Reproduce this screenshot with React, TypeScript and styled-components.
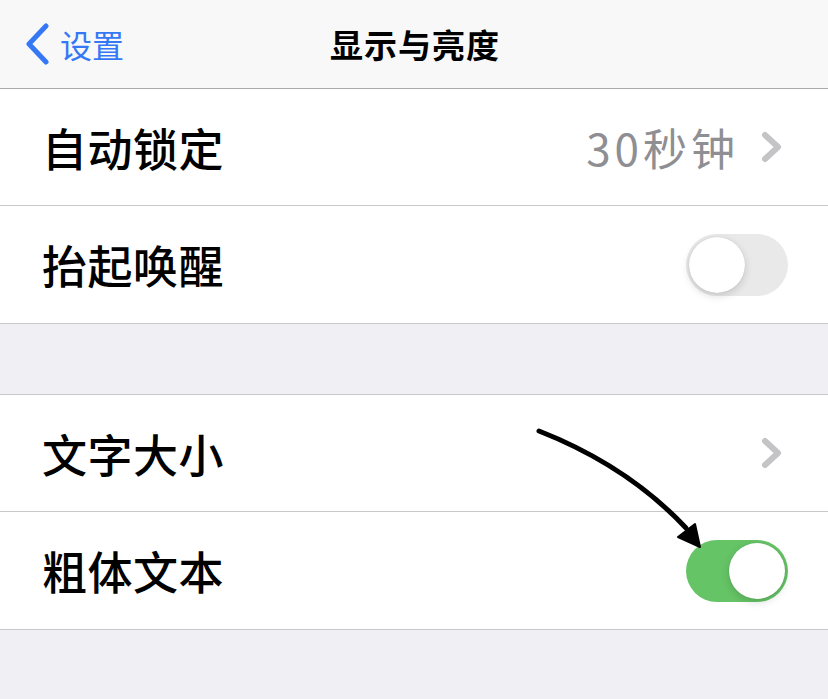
import styled, { createGlobalStyle } from "styled-components"

const GlobalStyle = createGlobalStyle`
	html, body {
		margin: 0;
		padding: 0;
		background: #efeff4;
		font-family: "Noto Sans CJK SC", "Noto Sans", sans-serif;
	}
`

const Page = styled.div`
	position: relative;
	width: 828px;
	height: 699px;
	overflow: hidden;
	background: #efeff4;
`

const NavBar = styled.div`
	position: relative;
	height: 88px;
	background: #f8f8f8;
	border-bottom: 1px solid #a9a9ac;
	display: flex;
	align-items: center;
	justify-content: center;
`

const BackButton = styled.div`
	position: absolute;
	left: 24px;
	top: 0;
	height: 88px;
	display: flex;
	align-items: center;
	gap: 10px;
	color: #3478f6;
	font-size: 32px;
`

const Title = styled.div`
	font-size: 33px;
	font-weight: 700;
	color: #000;
	letter-spacing: 1px;
	margin-left: 2px;
`

const Group = styled.div<{ $gap?: number }>`
	background: #fff;
	border-bottom: 1px solid #c8c7cc;
	border-top: ${(p) => (p.$gap ? "1px solid #c8c7cc" : "none")};
	margin-top: ${(p) => p.$gap ?? 0}px;
`

const Row = styled.div<{ $last?: boolean }>`
	height: ${(p) => (p.$last ? 117 : 116)}px;
	padding-left: 40px;
	display: flex;
	align-items: center;
	position: relative;
	border-bottom: ${(p) => (p.$last ? "none" : "1px solid #c8c7cc")};
`

const Label = styled.div`
	font-size: 45px;
	font-weight: 500;
	color: #000;
	flex: 1;
	padding-left: 2px;
	letter-spacing: 0.5px;
`

const Detail = styled.div`
	font-size: 44px;
	color: #8e8e93;
	margin-right: 22px;
	letter-spacing: 4px;
`

const Chevron = styled.svg`
	width: 22px;
	height: 32px;
	margin-right: 45px;
`

const Toggle = styled.div<{ $on?: boolean }>`
	width: 102px;
	height: 62px;
	border-radius: 31px;
	margin-right: 40px;
	box-sizing: border-box;
	background: ${(p) => (p.$on ? "#65c466" : "#e9e9ea")};
	display: flex;
	align-items: center;
	justify-content: ${(p) => (p.$on ? "flex-end" : "flex-start")};
	padding: 3px;
`

const Knob = styled.div`
	width: 56px;
	height: 56px;
	border-radius: 50%;
	background: #fff;
	box-shadow: 0 3px 8px rgba(0, 0, 0, 0.15), 0 0 1px rgba(0, 0, 0, 0.2);
`

const Arrow = styled.svg`
	position: absolute;
	left: 0;
	top: 0;
	width: 828px;
	height: 699px;
	pointer-events: none;
`

const ChevronIcon = () => (
	<Chevron viewBox="0 0 22 32">
		<path d="M4 4 L17 16 L4 28" fill="none" stroke="#c4c4c7" strokeWidth="6" strokeLinecap="round" strokeLinejoin="round" />
	</Chevron>
)

export default function App() {
	return (
		<Page>
			<GlobalStyle />
			<NavBar>
				<BackButton>
					<svg width="26" height="42" viewBox="0 0 26 42">
						<path d="M22 3 L5 21 L22 39" fill="none" stroke="#3478f6" strokeWidth="5" strokeLinecap="round" strokeLinejoin="round" />
					</svg>
					<span>设置</span>
				</BackButton>
				<Title>显示与亮度</Title>
			</NavBar>
			<Group>
				<Row>
					<Label>自动锁定</Label>
					<Detail>30秒钟</Detail>
					<ChevronIcon />
				</Row>
				<Row $last>
					<Label>抬起唤醒</Label>
					<Toggle>
						<Knob />
					</Toggle>
				</Row>
			</Group>
			<Group $gap={70}>
				<Row>
					<Label>文字大小</Label>
					<ChevronIcon />
				</Row>
				<Row $last>
					<Label>粗体文本</Label>
					<Toggle $on>
						<Knob />
					</Toggle>
				</Row>
			</Group>
			<Arrow viewBox="0 0 828 699">
				<path d="M539 431 Q628 466 686 528" fill="none" stroke="#000" strokeWidth="5" strokeLinecap="round" />
				<path d="M700 547 L678 537 L695 524 Z" fill="#000" stroke="#000" strokeWidth="2" strokeLinejoin="round" />
			</Arrow>
		</Page>
	)
}
